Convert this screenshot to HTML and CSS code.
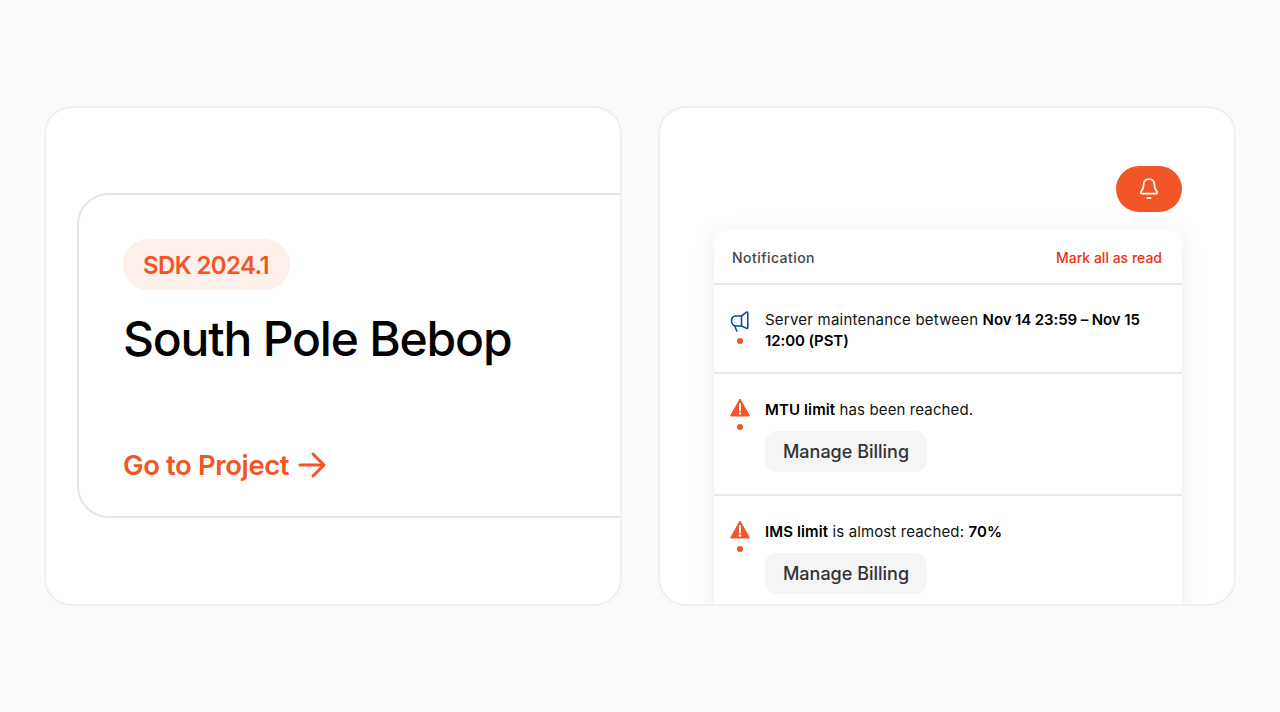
FILE: index.html
```html
<!DOCTYPE html>
<html lang="en">
<head>
    <meta charset="UTF-8">
    <title>SDK cards</title>
    <link rel="stylesheet" href="styles.css">
</head>
<body>
    <div class="showcase">
        <section class="frame frame-project">
            <div class="project-card">
                <span class="version-pill">SDK 2024.1</span>
                <h1 class="project-name">South Pole Bebop</h1>
                <a class="project-link" href="#">
                    Go to Project
                    <svg class="arrow" width="28" height="26" viewBox="0 0 28 26" fill="none" stroke="currentColor" stroke-width="3" stroke-linecap="round" stroke-linejoin="round"><path d="M2 13h24M15 2l11 11-11 11"/></svg>
                </a>
            </div>
        </section>
        <section class="frame frame-notify">
            <button class="bell-button">
                <svg width="22" height="24" viewBox="0 0 22 24" fill="none" stroke="#fff" stroke-width="1.7" stroke-linecap="round" stroke-linejoin="round"><path d="M11 2c-3.300 0-5.400 2.500-5.400 5.600 0 3.600-.8 5.400-2.500 7-.8.8-.3 2 .8 2h14.200c1.100 0 1.600-1.200.8-2-1.700-1.600-2.500-3.400-2.500-7C16.400 4.500 14.300 2 11 2z"/><path d="M9.500 21h3" stroke-width="2"/></svg>
            </button>
            <div class="panel">
                <div class="panel-head">
                    <span class="panel-title">Notification</span>
                    <a class="mark-read" href="#">Mark all as read</a>
                </div>
                <div class="note note-first">
                    <div class="note-side note-side-first">
                        <svg width="20" height="21" viewBox="0 0 20 21" fill="none" stroke="#0f4c9c" stroke-width="1.600" stroke-linecap="round" stroke-linejoin="round"><path d="M16.500 1.200c.7-.4 1.300 0 1.300.8v14.500c0 .8-.6 1.200-1.300.8L11.500 15H6.500C3.500 15 1.500 13 1.500 10s2-5 5-5h5z"/><path d="M11.500 5v10"/><path d="M4.500 14.500l2.300 5.500"/></svg>
                        <span class="dot"></span>
                    </div>
                    <p class="note-text"><span class="wide">Server maintenance between</span> <b class="tight">Nov 14 23:59 – Nov 15</b><br><b class="tight">12:00 (PST)</b></p>
                </div>
                <div class="note">
                    <div class="note-side">
                        <svg width="20" height="20" viewBox="0 0 20 20"><path fill="#f25526" stroke="#f25526" stroke-width="1" stroke-linejoin="round" d="M10 1 19.500 18H.5z"/><path d="M10 6v6.500" stroke="#fff" stroke-width="2" stroke-linecap="round"/><circle cx="10" cy="15.500" r="1.200" fill="#fff"/></svg>
                        <span class="dot"></span>
                    </div>
                    <div class="note-body">
                        <p class="note-text"><b>MTU limit</b> has been reached.</p>
                        <button class="billing-button">Manage Billing</button>
                    </div>
                </div>
                <div class="note">
                    <div class="note-side">
                        <svg width="20" height="20" viewBox="0 0 20 20"><path fill="#f25526" stroke="#f25526" stroke-width="1" stroke-linejoin="round" d="M10 1 19.500 18H.5z"/><path d="M10 6v6.500" stroke="#fff" stroke-width="2" stroke-linecap="round"/><circle cx="10" cy="15.500" r="1.200" fill="#fff"/></svg>
                        <span class="dot"></span>
                    </div>
                    <div class="note-body">
                        <p class="note-text"><b>IMS limit</b> is almost reached: <b>70%</b></p>
                        <button class="billing-button">Manage Billing</button>
                    </div>
                </div>
            </div>
        </section>
    </div>
</body>
</html>
```

FILE: styles.css
```css
body {
    margin: 0;
    height: 712px;
    overflow: hidden;
    background: #fbfbfb;
    font-family: "Inter", "Noto Sans", sans-serif;
    color: #000;
}
.showcase {
    display: flex;
    gap: 36px;
    padding: 106px 44px 0;
}
.frame {
    box-sizing: border-box;
    width: 578px;
    height: 500px;
    background: #fff;
    border: 2px solid #f0f0f0;
    border-radius: 28px;
    overflow: hidden;
}
.frame-project {
    padding: 85px 0 0 31px;
}
.project-card {
    box-sizing: border-box;
    width: 640px;
    height: 325px;
    padding: 44px 44px 0;
    border: 2px solid #e6e6e6;
    border-radius: 32px;
}
.version-pill {
    display: inline-block;
    padding: 2px 21px 0 20px;
    line-height: 49px;
    font-size: 24px;
    font-weight: 600;
    letter-spacing: -0.6px;
    color: #f25526;
    background: #fdefe9;
    border-radius: 26px;
}
.project-name {
    margin: 19px 0 0;
    font-size: 48px;
    line-height: 60px;
    font-weight: 500;
    letter-spacing: -1.2px;
}
.project-link {
    display: flex;
    align-items: center;
    gap: 9px;
    margin-top: 79px;
    font-size: 27.5px;
    line-height: 34px;
    font-weight: 600;
    letter-spacing: -0.4px;
    color: #f25526;
    text-decoration: none;
}
.frame-notify {
    display: flex;
    flex-direction: column;
    align-items: flex-end;
    padding: 58px 52px 0 54px;
}
.bell-button {
    display: flex;
    align-items: center;
    justify-content: center;
    flex-shrink: 0;
    width: 66px;
    height: 46px;
    padding: 0;
    border: none;
    border-radius: 23px;
    background: #f25526;
}
.panel {
    width: 468px;
    flex-shrink: 0;
    margin-top: 18px;
    background: #fff;
    border-radius: 14px 14px 0 0;
    box-shadow: 0 4px 24px rgba(0, 0, 0, 0.08);
}
.panel-head {
    box-sizing: border-box;
    display: flex;
    justify-content: space-between;
    align-items: center;
    height: 55px;
    padding: 2px 20px 0 18px;
    border-bottom: 2px solid #e8e8e8;
    font-size: 14px;
}
.panel-title {
    font-weight: 500;
    letter-spacing: 0.45px;
    color: #444;
}
.mark-read {
    font-weight: 500;
    color: #e8340f;
    text-decoration: none;
}
.note {
    display: flex;
    gap: 15px;
    padding: 25px 20px 22px 16px;
    border-bottom: 2px solid #e8e8e8;
}
.note-first {
    padding-top: 24px;
    padding-bottom: 21px;
}
.note-side {
    display: flex;
    flex-direction: column;
    align-items: center;
    gap: 6px;
    flex-shrink: 0;
    width: 20px;
    margin-top: -1px;
}
.note-side-first {
    gap: 6px;
    margin-top: 2px;
}
.dot {
    width: 6px;
    height: 6px;
    border-radius: 50%;
    background: #f25526;
}
.note-text {
    margin: 0;
    font-size: 15px;
    line-height: 21px;
    color: #111;
}
.note-text .wide {
    letter-spacing: 0.22px;
}
.note-body .note-text {
    letter-spacing: 0.12px;
}
.note-text b {
    font-weight: 600;
    color: #000;
}
.note-text .tight {
    letter-spacing: -0.1px;
}
.billing-button {
    display: block;
    margin-top: 11px;
    width: 162px;
    height: 41px;
    padding: 0;
    border: none;
    border-radius: 12px;
    background: #f5f5f5;
    font-family: inherit;
    font-size: 18px;
    font-weight: 500;
    color: #333;
}
```
